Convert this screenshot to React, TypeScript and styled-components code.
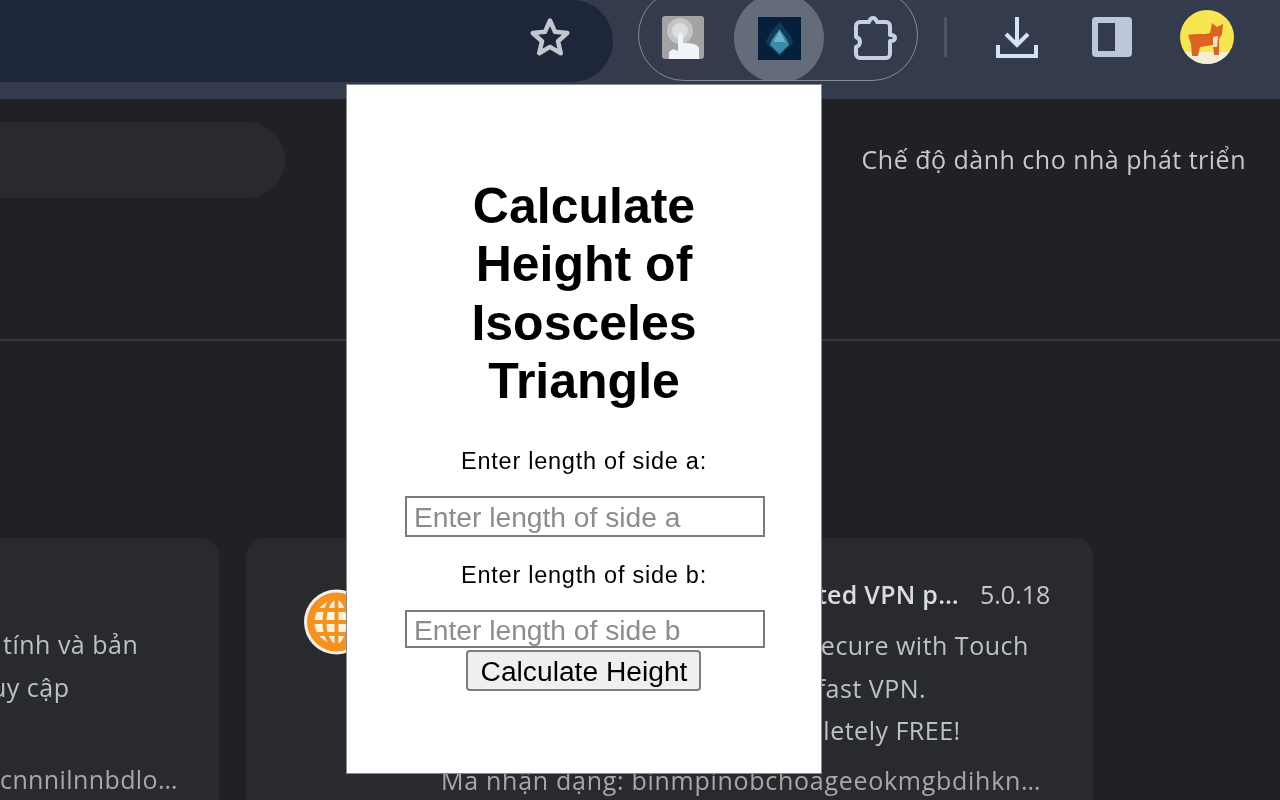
import React from "react";
import styled, { createGlobalStyle } from "styled-components";

const Global = createGlobalStyle`
  html, body { margin: 0; padding: 0; background: #202124; }
  #root { width: 1280px; height: 800px; overflow: hidden; }
`;

const Page = styled.div`
  position: relative;
  width: 1280px;
  height: 800px;
  overflow: hidden;
  background: #202124;
  display: flex;
  flex-direction: column;
  font-family: "Open Sans", "Noto Sans", sans-serif;
  filter: blur(0.6px);
`;

const Toolbar = styled.header`
  height: 99px;
  flex: none;
  background: #333b4c;
  display: flex;
  align-items: flex-start;
  overflow: hidden;
`;

const AddressBar = styled.div`
  width: 613px;
  height: 82px;
  flex: none;
  background: #1e273a;
  border-radius: 0 41px 41px 0;
  display: flex;
  align-items: center;
  justify-content: flex-end;
  padding: 0 41px 8px 0;
  box-sizing: border-box;
`;

const ExtensionGroup = styled.div`
  width: 280px;
  height: 92px;
  margin: -11px 0 0 25px;
  flex: none;
  box-sizing: border-box;
  border: 1.5px solid #858b97;
  border-radius: 46px;
  display: flex;
  align-items: center;
  gap: 6px;
  position: relative;
  overflow: hidden;
`;

const ExtensionSlot = styled.div<{ $active?: boolean }>`
  width: 90px;
  height: 90px;
  margin-top: 6px;
  flex: none;
  border-radius: 50%;
  display: flex;
  align-items: center;
  justify-content: center;
  background: ${(p) => (p.$active ? "#656c79" : "transparent")};
  &:first-child { margin-left: -1px; }
`;

const Separator = styled.div`
  width: 3px;
  height: 40px;
  margin: 17px 0 0 26px;
  background: #4d5564;
  flex: none;
`;

const ToolButton = styled.div<{ $gap: number }>`
  width: 48px;
  height: 48px;
  margin: 13px 0 0 ${(p) => p.$gap}px;
  flex: none;
  display: flex;
  align-items: center;
  justify-content: center;
  svg { flex: none; }
`;

const Content = styled.main`
  flex: 1;
  display: flex;
  flex-direction: column;
  min-height: 0;
`;

const TopRow = styled.div`
  height: 242px;
  box-sizing: border-box;
  padding-top: 23px;
  display: flex;
  justify-content: space-between;
  border-bottom: 2px solid #37383b;
  flex: none;
`;

const SearchPill = styled.div`
  width: 285px;
  height: 76px;
  background: #292a2d;
  border-radius: 0 38px 38px 0;
`;

const DevMode = styled.div`
  margin: 20px 34px 0 0;
  font-size: 25px;
  line-height: 34px;
  letter-spacing: 0.5px;
  color: #c6c8cb;
  white-space: nowrap;
`;

const CardRow = styled.div`
  display: flex;
  gap: 27px;
  margin-top: 197px;
`;

const CardLeft = styled.section`
  width: 219px;
  height: 300px;
  flex: none;
  background: #292a2d;
  border-radius: 0 18px 0 0;
  box-sizing: border-box;
  padding-top: 85px;
  overflow: hidden;
`;

const CardMain = styled.section`
  width: 847px;
  height: 300px;
  flex: none;
  background: #292a2d;
  border-radius: 18px 18px 0 0;
  box-sizing: border-box;
  padding: 38px 0 0 58px;
  display: flex;
  overflow: hidden;
`;

const IconWrap = styled.div`
  width: 137px;
  flex: none;
  padding-top: 13px;
`;

const CardBody = styled.div`
  width: 640px;
  flex: none;
  min-width: 0;
`;

const TitleLine = styled.div`
  display: flex;
  align-items: baseline;
  height: 36px;
  font-size: 25px;
  line-height: 36px;
  color: #c6c8cb;
  white-space: nowrap;
`;

const TitleText = styled.span`
  width: 518px;
  flex: none;
  font-weight: 600;
  letter-spacing: 0.25px;
  color: #dadce0;
  white-space: nowrap;
`;

const Version = styled.span`
  margin-left: 21px;
`;

const Desc = styled.div<{ $shift?: number }>`
  font-size: 25px;
  line-height: 42.5px;
  letter-spacing: 0.5px;
  color: #bdc1c6;
  white-space: nowrap;
  margin-left: ${(p) => p.$shift ?? 0}px;
`;

const DescBlock = styled.div<{ $top: number; $h: number }>`
  margin-top: ${(p) => p.$top}px;
  height: ${(p) => p.$h}px;
`;

const IdLine = styled.div<{ $track: number }>`
  margin-top: 10px;
  font-size: 25px;
  line-height: 36px;
  letter-spacing: ${(p) => p.$track}px;
  color: #a6a8ab;
  white-space: nowrap;
`;

const Popup = styled.div`
  position: absolute;
  left: 347px;
  top: 85px;
  width: 474px;
  height: 688px;
  background: #fff;
  box-shadow: 0 0 0 1px #8a8b8e;
  box-sizing: border-box;
  padding-top: 92px;
  display: flex;
  flex-direction: column;
  align-items: center;
  font-family: "Liberation Sans", Arial, sans-serif;
  color: #000;
`;

const Heading = styled.h1`
  margin: 0 0 36px 0;
  width: 320px;
  text-align: center;
  font-size: 50px;
  line-height: 58.3px;
  font-weight: 700;
`;

const FieldLabel = styled.label`
  font-size: 23.5px;
  line-height: 30px;
  letter-spacing: 0.75px;
  margin: 0 0 20px 0;
`;

const TextField = styled.input<{ $h: number }>`
  width: 360px;
  height: ${(p) => p.$h}px;
  box-sizing: border-box;
  margin: 0 0 0 2px;
  padding: 2px 7px 0;
  border: 2px solid #7b7b7b;
  background: #fff;
  font-family: inherit;
  font-size: 28.2px;
  outline: none;
  flex: none;
  &::placeholder { color: #8c8c8c; opacity: 1; }
`;

const CalcButton = styled.button`
  width: 235px;
  height: 41px;
  margin: 2px 2px 0 0;
  padding: 0 0 0 2px;
  box-sizing: border-box;
  border: 2px solid #7d7d7d;
  border-radius: 4px;
  background: #efefef;
  color: #000;
  font-family: inherit;
  font-size: 28.2px;
  line-height: 36px;
  flex: none;
`;

const Spacer = styled.div<{ $h: number }>`
  height: ${(p) => p.$h}px;
  flex: none;
`;

const StarIcon = () => (
  <svg width="44" height="44" viewBox="0 0 44 44" fill="none">
    <path d="M22 5.500l5 11.300 12.300 1.200-9.300 8.200 2.800 12-10.800-6.300-10.800 6.300 2.800-12-9.300-8.200L17 16.800z" stroke="#c3c7ce" strokeWidth="4.500" strokeLinejoin="round" />
  </svg>
);

const TouchIcon = () => (
  <svg width="42" height="44" viewBox="0 0 42 44">
    <rect width="42" height="43" rx="3" fill="#a3a3a3" />
    <circle cx="18" cy="15" r="13" fill="#c4c4c4" />
    <circle cx="18" cy="15" r="8" fill="#dcdcdc" />
    <path d="M7 43V36l4-3 5 2V19c0-3 5-3 5 0v8c8 0 15 1 16 5v11z" fill="#eff4f9" />
  </svg>
);

const PeakIcon = () => (
  <svg width="43" height="43" viewBox="0 0 43 43">
    <rect width="43" height="43" fill="#06203c" />
    <path d="M21.500 5C15 12 9 20 8 26l13.500 13L35 26C34 20 28 12 21.500 5z" fill="#123a55" />
    <path d="M21.500 12C18 17 13 23 12 28l9.500 9 9.500-9C30 23 25 17 21.500 12z" fill="#3b8ba8" />
    <path d="M21.500 14l-6 11h12z" fill="#6ab6c8" />
  </svg>
);

const PuzzleIcon = () => (
  <svg width="46" height="46" viewBox="0 0 46 46" fill="none">
    <path d="M8 7h9c1-3 2-4 4-4s3 1 4 4h9a4 4 0 0 1 4 4v9c3 0 5 1 5 3s-2 3-5 3v13a4 4 0 0 1-4 4H8a4 4 0 0 1-4-4v-7c3-1 4-3 4-5s-1-4-4-5V11a4 4 0 0 1 4-4z" stroke="#c5d0e2" strokeWidth="4" strokeLinejoin="round" />
  </svg>
);

const DownloadIcon = () => (
  <svg width="44" height="44" viewBox="0 0 44 44" fill="none">
    <path d="M22 2v27M11 19l11 11 11-11" stroke="#d6e2f6" strokeWidth="4" />
    <path d="M3 30v11h38V30" stroke="#d6e2f6" strokeWidth="4" />
  </svg>
);

const PanelIcon = () => (
  <svg width="40" height="40" viewBox="0 0 40 40">
    <rect width="40" height="40" rx="4" fill="#bcc7db" />
    <rect x="6" y="6" width="17" height="28" fill="#333b4c" />
  </svg>
);

const AvatarIcon = () => (
  <svg width="54" height="54" viewBox="0 0 54 54">
    <defs>
      <clipPath id="avatar-clip"><circle cx="27" cy="27" r="27" /></clipPath>
    </defs>
    <g clipPath="url(#avatar-clip)">
      <rect width="54" height="54" fill="#f7e64f" />
      <rect y="42" width="54" height="12" fill="#f3efd6" />
      <path d="M8 25c8-2 16 0 22-2l2-10 5 4 6-3-1 10-3 5v16h-5l-1-10-13 2-2 9H12l-1-12z" fill="#dc6321" />
      <path d="M33 27l5-1-1 11h-4z" fill="#f4e2c5" />
    </g>
  </svg>
);

const GlobeIcon = () => (
  <svg width="56" height="66" viewBox="0 0 56 66" fill="none">
    <circle cx="32.500" cy="33" r="32.500" fill="#f5f0e8" />
    <circle cx="32.500" cy="33" r="29.500" fill="#f5921e" />
    <circle cx="32.500" cy="33" r="22" fill="#fff2df" />
    <g stroke="#f5921e" strokeWidth="4">
      <ellipse cx="32.500" cy="33" rx="12" ry="24" />
      <path d="M6 33h54M11 21h44M11 45h44M32.500 8v50" />
    </g>
  </svg>
);

export default function App() {
  return (
    <Page>
      <Global />
      <Toolbar>
        <AddressBar><StarIcon /></AddressBar>
        <ExtensionGroup>
          <ExtensionSlot><TouchIcon /></ExtensionSlot>
          <ExtensionSlot $active><PeakIcon /></ExtensionSlot>
          <ExtensionSlot><PuzzleIcon /></ExtensionSlot>
        </ExtensionGroup>
        <Separator />
        <ToolButton $gap={46}><DownloadIcon /></ToolButton>
        <ToolButton $gap={47}><PanelIcon /></ToolButton>
        <ToolButton $gap={47}><AvatarIcon /></ToolButton>
      </Toolbar>
      <Content>
        <TopRow>
          <SearchPill />
          <DevMode>Chế độ dành cho nhà phát triển</DevMode>
        </TopRow>
        <CardRow>
          <CardLeft>
            <Desc $shift={3}>tính và bản</Desc>
            <Desc $shift={-9}>uy cập</Desc>
            <DescBlock $top={0} $h={42.5} />
            <IdLine $track={0.4}>cnnnilnnbdlo…</IdLine>
          </CardLeft>
          <CardMain>
            <IconWrap><GlobeIcon /></IconWrap>
            <CardBody>
              <TitleLine>
                <TitleText>Touch VPN - Secure and unlimited VPN p…</TitleText>
                <Version>5.0.18</Version>
              </TitleLine>
              <DescBlock $top={12} $h={127.5}>
                <Desc>Stay private online and totally secure with Touch</Desc>
                <Desc>Unlimited, reliable and blazing fast VPN.</Desc>
                <Desc>Totally free to use, as it is completely FREE!</Desc>
              </DescBlock>
              <IdLine $track={0.72}>Mã nhận dạng: binmpinobchoageeokmgbdihkn…</IdLine>
            </CardBody>
          </CardMain>
        </CardRow>
      </Content>
      <Popup>
        <Heading>Calculate Height of Isosceles Triangle</Heading>
        <FieldLabel>Enter length of side a:</FieldLabel>
        <TextField $h={41} placeholder="Enter length of side a" />
        <Spacer $h={23} />
        <FieldLabel>Enter length of side b:</FieldLabel>
        <TextField $h={38} placeholder="Enter length of side b" />
        <CalcButton>Calculate Height</CalcButton>
      </Popup>
    </Page>
  );
}
